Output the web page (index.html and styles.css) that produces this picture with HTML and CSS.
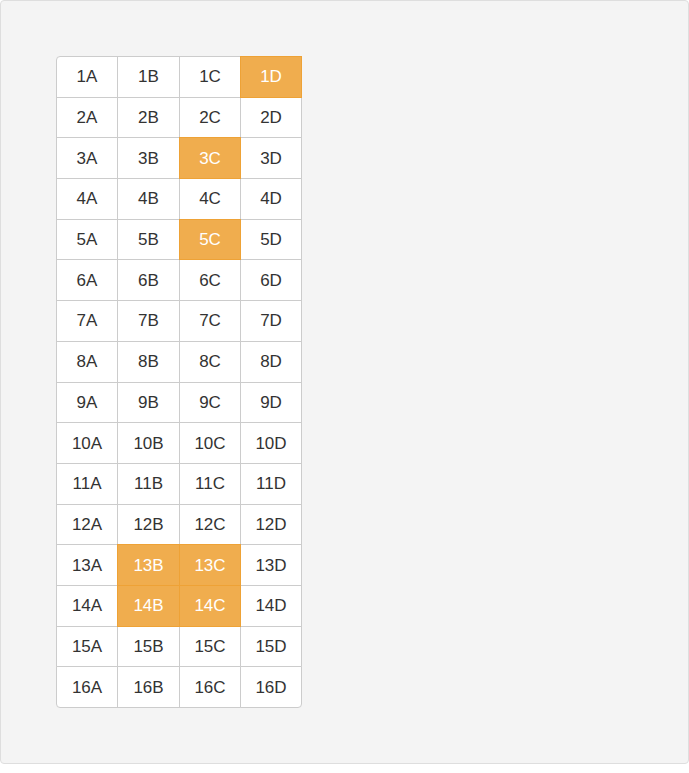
FILE: index.html
```html
<!DOCTYPE html>
<html>
<head>
<meta charset="utf-8">
<link rel="stylesheet" href="styles.css">
</head>
<body>
<div class="panel">
  <div class="seats">
    <div class="seat">1A</div><div class="seat">1B</div><div class="seat">1C</div><div class="seat on">1D</div>
    <div class="seat">2A</div><div class="seat">2B</div><div class="seat">2C</div><div class="seat">2D</div>
    <div class="seat">3A</div><div class="seat">3B</div><div class="seat on">3C</div><div class="seat">3D</div>
    <div class="seat">4A</div><div class="seat">4B</div><div class="seat">4C</div><div class="seat">4D</div>
    <div class="seat">5A</div><div class="seat">5B</div><div class="seat on">5C</div><div class="seat">5D</div>
    <div class="seat">6A</div><div class="seat">6B</div><div class="seat">6C</div><div class="seat">6D</div>
    <div class="seat">7A</div><div class="seat">7B</div><div class="seat">7C</div><div class="seat">7D</div>
    <div class="seat">8A</div><div class="seat">8B</div><div class="seat">8C</div><div class="seat">8D</div>
    <div class="seat">9A</div><div class="seat">9B</div><div class="seat">9C</div><div class="seat">9D</div>
    <div class="seat">10A</div><div class="seat">10B</div><div class="seat">10C</div><div class="seat">10D</div>
    <div class="seat">11A</div><div class="seat">11B</div><div class="seat">11C</div><div class="seat">11D</div>
    <div class="seat">12A</div><div class="seat">12B</div><div class="seat">12C</div><div class="seat">12D</div>
    <div class="seat">13A</div><div class="seat on">13B</div><div class="seat on">13C</div><div class="seat">13D</div>
    <div class="seat">14A</div><div class="seat on">14B</div><div class="seat on">14C</div><div class="seat">14D</div>
    <div class="seat">15A</div><div class="seat">15B</div><div class="seat">15C</div><div class="seat">15D</div>
    <div class="seat bl">16A</div><div class="seat">16B</div><div class="seat">16C</div><div class="seat br">16D</div>
  </div>
</div>
</body>
</html>
```
FILE: styles.css
```css
html, body {
  margin: 0;
  padding: 0;
  background: #ffffff;
}
body {
  font-family: "Liberation Sans", Arial, sans-serif;
}
.panel {
  box-sizing: border-box;
  width: 689px;
  height: 764px;
  background: #f4f4f4;
  border: 1px solid #dedede;
  border-radius: 4px;
  padding: 55px 0 0 55px;
}
.seats {
  display: grid;
  grid-template-columns: 61px 62px 61px 61px;
  grid-auto-rows: 40.69px;
  width: 245px;
  margin: 1px 0 0 1px;
}
.seat {
  box-sizing: border-box;
  width: calc(100% + 1px);
  height: 41.69px;
  margin: -1px 0 0 -1px;
  padding-top: 1px;
  border: 1px solid #cccccc;
  background: #ffffff;
  color: #333333;
  font-size: 17px;
  display: flex;
  align-items: center;
  justify-content: center;
  position: relative;
}
.seat:first-child {
  border-top-left-radius: 4px;
}
.seat.bl {
  border-bottom-left-radius: 4px;
}
.seat.br {
  border-bottom-right-radius: 4px;
}
.seat.on {
  background: #f0ad4e;
  border-color: #eea236;
  color: #ffffff;
  z-index: 1;
}
```
